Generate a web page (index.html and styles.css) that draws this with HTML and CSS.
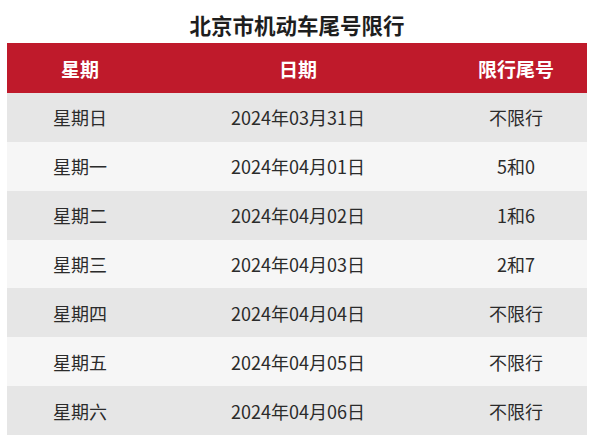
FILE: index.html
```html
<!DOCTYPE html>
<html lang="zh-CN">
<head>
<meta charset="utf-8">
<title>北京市机动车尾号限行</title>
<link rel="stylesheet" href="styles.css">
</head>
<body>
<div class="page">
  <h1 class="title">北京市机动车尾号限行</h1>
  <table class="limit">
    <colgroup>
      <col class="c1"><col class="c2"><col class="c3">
    </colgroup>
    <thead>
      <tr><th>星期</th><th>日期</th><th>限行尾号</th></tr>
    </thead>
    <tbody>
      <tr><td>星期日</td><td>2024年03月31日</td><td>不限行</td></tr>
      <tr><td>星期一</td><td>2024年04月01日</td><td>5和0</td></tr>
      <tr><td>星期二</td><td>2024年04月02日</td><td>1和6</td></tr>
      <tr><td>星期三</td><td>2024年04月03日</td><td>2和7</td></tr>
      <tr><td>星期四</td><td>2024年04月04日</td><td>不限行</td></tr>
      <tr><td>星期五</td><td>2024年04月05日</td><td>不限行</td></tr>
      <tr><td>星期六</td><td>2024年04月06日</td><td>不限行</td></tr>
    </tbody>
  </table>
</div>
</body>
</html>
```
FILE: styles.css
```css
html, body {
  margin: 0;
  padding: 0;
  background: #ffffff;
}
body {
  font-family: "Noto Sans CJK SC", "Noto Sans", sans-serif;
  color: #2b2b2b;
}
.page {
  padding: 8px 13px 0 7px;
}
.title {
  margin: 0;
  height: 35px;
  padding-top: 2px;
  box-sizing: border-box;
  line-height: 30px;
  font-size: 21.5px;
  font-weight: 700;
  color: #1e1e1e;
  text-align: center;
}
.limit {
  width: 580px;
  border-collapse: collapse;
  table-layout: fixed;
}
.c1 { width: 146px; }
.c2 { width: 290px; }
.c3 { width: 144px; }
.limit th {
  background: #bf1a2b;
  color: #ffffff;
  font-size: 19px;
  font-weight: 700;
  height: 50px;
  padding: 0;
  text-align: center;
}
.limit td {
  height: 48.86px;
  padding: 0;
  font-size: 18px;
  text-align: center;
  color: #2b2b2b;
}
.limit tbody tr:nth-child(odd) td { background: #e6e6e6; }
.limit tbody tr:nth-child(even) td { background: #f6f6f6; }
.limit td:last-child, .limit th:last-child { padding-left: 2px; }
```
